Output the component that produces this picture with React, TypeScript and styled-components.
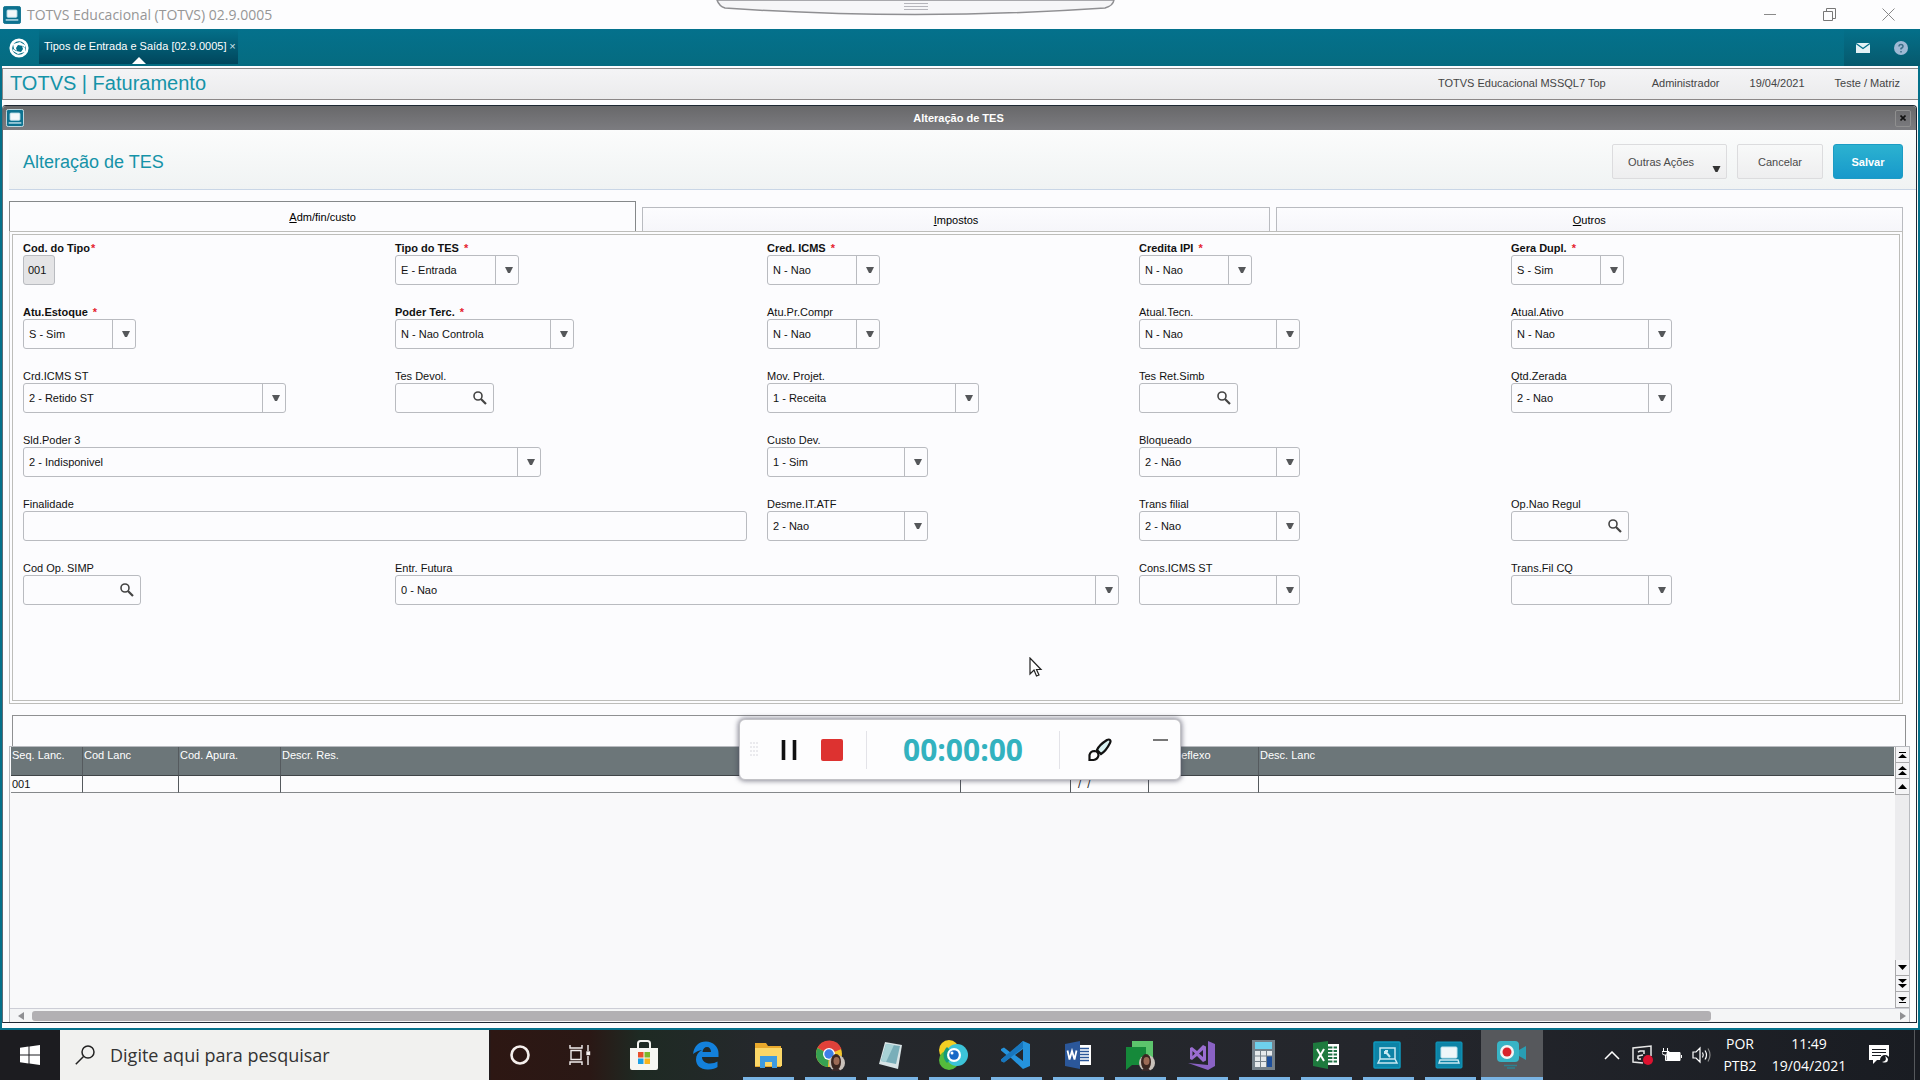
import React from "react";
import styled, { createGlobalStyle, css } from "styled-components";

const ui = `"Liberation Sans", Arial, sans-serif`;
const win = `"Open Sans", "Noto Sans", sans-serif`;
const line = "#b9bbc0";
const teal = "#04708a";

const Global = createGlobalStyle`
  *, *::before, *::after { box-sizing: border-box; }
  body { margin: 0; background: #fcfcfe; }
  button, input, select { font: inherit; color: inherit; margin: 0; }
  h1, h2 { margin: 0; font-weight: 400; }
  svg { display: block; }
`;

const Desktop = styled.div`
  position: relative;
  min-height: 100vh;
  display: flex;
  flex-direction: column;
  font: 11px/14px ${ui};
  color: #111;
  overflow: hidden;
`;

const WindowBar = styled.header`
  display: flex;
  align-items: center;
  height: 29px;
  padding: 0 22px 0 3px;
  gap: 6px;
  background: #fdfdfe;
`;
const WindowTitle = styled.span`
  flex: 1;
  font: 14px/20px ${win};
  color: #969696;
`;
const WindowControls = styled.div`
  display: flex;
  gap: 39px;
`;
const PlainButton = styled.button`
  display: flex;
  align-items: center;
  justify-content: center;
  min-width: 20px;
  padding: 0;
  border: 0;
  background: none;
`;
const PullTab = styled.svg`
  position: absolute;
  top: 0;
  left: 50%;
  margin-left: -244px;
`;

const AppBar = styled.nav`
  display: flex;
  align-items: center;
  height: 37px;
  padding-left: 9px;
  background: linear-gradient(#04718c, #056b80);
  color: #fff;
`;
const AppTab = styled.div`
  position: relative;
  display: flex;
  align-items: center;
  align-self: stretch;
  gap: 2px;
  margin: 0 auto 2px 10px;
  padding: 0 2px 2px 5px;
  background: linear-gradient(#04708a, #00465c);
  &::after {
    content: "";
    position: absolute;
    left: 50%;
    bottom: 0;
    margin-left: -7px;
    border: 7px solid transparent;
    border-top: 0;
    border-bottom-color: #fff;
  }
`;
const TabClose = styled(PlainButton)`
  min-width: 8px;
  color: #cfe3ea;
`;
const BarAction = styled(PlainButton)`
  width: 38px;
  align-self: stretch;
  background: linear-gradient(#04708a, #06596d);
`;

const Workspace = styled.main`
  flex: 1;
  display: flex;
  flex-direction: column;
  padding: 2px 1px 5px 0;
  border: solid ${teal};
  border-width: 0 2px 2px;
  background: #fcfcfe;
`;
const ModuleBar = styled.div`
  display: flex;
  align-items: center;
  height: 32px;
  margin-right: -1px;
  padding: 0 18px 2px 7px;
  border: 1px solid #8b8787;
  border-width: 1px 0 1px 1px;
  background: linear-gradient(#f4f4f6, #ebebec);
`;
const ModuleTitle = styled.h1`
  flex: 1;
  font-size: 20px;
  line-height: 26px;
  color: #1593a8;
`;
const SessionInfo = styled.span<{ $gap: number }>`
  margin-left: ${(p) => p.$gap}px;
  color: #444;
`;

const Dialog = styled.section`
  flex: 1;
  display: flex;
  flex-direction: column;
  margin-top: 5px;
  border: 1px solid #1d2733;
  border-left-color: #5b6a74;
  border-radius: 4px 4px 0 0;
`;
const DialogBar = styled.div`
  display: grid;
  grid-template-columns: 24px 1fr 24px;
  align-items: center;
  height: 24px;
  padding: 0 5px 0 3px;
  border-radius: 3px 3px 0 0;
  background: linear-gradient(#68686a, #7c7c80);
  color: #fff;
  font-weight: 700;
  text-align: center;
`;
const DialogClose = styled(PlainButton)`
  justify-self: end;
  width: 16px;
  min-width: 0;
  height: 17px;
  border: 1px solid #8f8f8f;
  border-radius: 2px;
  color: #111;
`;
const DialogHead = styled.div`
  display: flex;
  align-items: center;
  gap: 10px;
  height: 60px;
  margin-left: 6px;
  padding: 4px 13px 0 14px;
  border-bottom: 1px solid #c9d6e6;
  background: linear-gradient(#fbfcfc, #f0f3f3);
`;
const DialogTitle = styled.h2`
  flex: 1;
  font-size: 18px;
  line-height: 24px;
  color: #1593a8;
`;
const ActionButton = styled.button<{ $w: number; $primary?: boolean }>`
  display: flex;
  align-items: center;
  justify-content: center;
  width: ${(p) => p.$w}px;
  height: 35px;
  padding: 0;
  border: 1px solid #dcdcde;
  border-radius: 2px;
  background: linear-gradient(#f8f9f9, #eeeeef);
  color: #4a4a4a;
  ${(p) =>
    p.$primary &&
    css`
      border-color: #1c9cc4;
      border-radius: 3px;
      background: linear-gradient(#2cb2d0, #1799cb);
      color: #fff;
      font-weight: 700;
    `}
`;
const MenuButton = styled(ActionButton)`
  justify-content: space-between;
  padding: 0 5px 0 15px;
  svg { margin-top: 14px; }
`;

const TabList = styled.div`
  display: flex;
  align-items: flex-end;
  gap: 6px;
  margin: 11px 13px 0 6px;
`;
const FolderTab = styled.button<{ $active?: boolean }>`
  flex: 1 1 0;
  height: ${(p) => (p.$active ? 30 : 24)}px;
  padding: 0;
  border: 1px solid ${(p) => (p.$active ? "#85888a" : line)};
  border-bottom: 0;
  background: ${(p) => (p.$active ? "#fcfcfe" : "linear-gradient(#fcfcfe, #f6f6fa)")};
  color: #000;
`;

const PanelFrame = styled.div`
  margin: 0 13px 0 6px;
  padding: 2px;
  border: 1px solid #bdbdba;
`;
const Panel = styled.form`
  display: grid;
  grid-template-columns: repeat(5, 1fr);
  align-content: start;
  gap: 20px 0;
  min-height: 467px;
  padding: 6px 16px 80px 10px;
  border: 1px solid #bdbdba;
`;
const FieldCell = styled.div<{ $span?: number }>`
  grid-column-end: span ${(p) => p.$span ?? 1};
  min-width: 0;
`;
const FieldLabel = styled.label<{ $required?: boolean }>`
  display: block;
  font-weight: ${(p) => (p.$required ? 700 : 400)};
  color: #111;
`;
const Star = styled.span<{ $tight?: boolean }>`
  margin-left: ${(p) => (p.$tight ? 1 : 5)}px;
  color: #e5232e;
`;
const FieldBox = styled.div<{ $w: number; $locked?: boolean }>`
  display: flex;
  width: ${(p) => p.$w}px;
  height: 30px;
  border: 1px solid ${line};
  border-radius: 3px;
  background: ${(p) => (p.$locked ? "#e4e4e6" : "#fcfcfe")};
  position: relative;
`;
const TextInput = styled.input`
  flex: 1;
  min-width: 0;
  padding: 0 4px;
  border: 0;
  background: none;
  outline: 0;
`;
const Dropdown = styled.select`
  flex: 1;
  min-width: 0;
  padding: 0 26px 0 5px;
  border: 0;
  background: none;
  appearance: none;
  outline: 0;
`;
const DropArrow = styled.span`
  position: absolute;
  top: 0;
  right: 0;
  bottom: 0;
  display: flex;
  align-items: center;
  justify-content: center;
  width: 23px;
  padding-left: 4px;
  border-left: 1px solid ${line};
  pointer-events: none;
`;
const LookupButton = styled(PlainButton)`
  width: 27px;
`;

const GridCaption = styled.div`
  height: 31px;
  margin: 11px 10px 0 9px;
  border: 1px solid #8f9092;
  border-bottom: 0;
`;
const GridFrame = styled.div`
  flex: 1;
  display: grid;
  grid-template: 1fr auto / 1fr 14px;
  margin: 0 6px;
  border: 1px solid ${line};
  border-bottom: 0;
  background: #f9f9fa;
`;
const DataTable = styled.table`
  align-self: start;
  width: calc(100% - 2px);
  margin-left: 1px;
  border-collapse: separate;
  border-spacing: 0;
  table-layout: fixed;
  th, td {
    padding: 0 1px;
    border-right: 1px solid #555a5e;
    text-align: left;
    font-weight: 400;
    overflow: hidden;
    white-space: nowrap;
  }
  th:last-child, td:last-child { border-right: 0; }
  th {
    height: 29px;
    padding-top: 1px;
    vertical-align: top;
    border-bottom: 1px solid #3f4447;
    background: #6c7679;
    color: #fff;
  }
  td {
    height: 17px;
    border-bottom: 1px solid #85888a;
    background: #fcfcfd;
  }
`;
const DateCell = styled.span`
  padding-left: 3px;
  white-space: pre;
`;
const VScroll = styled.div`
  display: flex;
  flex-direction: column;
  background: #ececee;
`;
const VScrollGap = styled.div`
  flex: 1;
`;
const ScrollButton = styled(PlainButton)`
  min-width: 0;
  height: 16px;
  border: 1px solid #a9a9ab;
  border-width: 0 0 1px 1px;
  background: #f4f4f6;
`;
const HScroll = styled.div`
  grid-column: 1 / -1;
  display: grid;
  grid-template-columns: 22px 1fr 12px;
  align-items: center;
  height: 14px;
  border-top: 1px solid #cdced6;
  background: #f4f5f6;
`;
const HThumb = styled.div`
  width: 90%;
  height: 10px;
  border-radius: 3px;
  background: #b2b0b3;
`;
const HArrow = styled(PlainButton)`
  min-width: 0;
`;

const Recorder = styled.div`
  position: absolute;
  left: 50%;
  bottom: 300px;
  display: flex;
  align-items: center;
  width: 442px;
  height: 61px;
  margin-left: -221px;
  border: 1px solid #c2c2c6;
  border-radius: 6px;
  background: #fdfdfe;
  box-shadow: 0 0 5px 1px rgba(60, 60, 80, 0.6);
`;
const RecGrip = styled.span`
  width: 28px;
  padding-left: 10px;
`;
const RecPause = styled(PlainButton)`
  width: 42px;
`;
const RecStop = styled(PlainButton)`
  width: 44px;
`;
const RecTime = styled.time`
  flex: 1;
  margin-left: 12px;
  border: solid #e3e3e8;
  border-width: 0 1px;
  font: 700 30px/38px ${win};
  color: #33b2bf;
  text-align: center;
`;
const RecBrush = styled(PlainButton)`
  width: 80px;
`;
const RecMin = styled(PlainButton)`
  width: 40px;
  height: 40px;
  align-items: flex-start;
  padding-top: 9px;
`;
const Pointer = styled.svg`
  position: absolute;
  left: 1029px;
  top: 657px;
`;

const Taskbar = styled.footer`
  display: flex;
  align-items: stretch;
  height: 50px;
  background: linear-gradient(90deg, #1c1c20 0, #1c1c20 489px, #2d1713 491px, #2a1815 590px, #1e2a23 640px, #25282c 760px, #24262c 1400px, #191c22 100%);
  color: #fff;
`;
const StartButton = styled(PlainButton)`
  width: 60px;
`;
const SearchBox = styled.label`
  display: flex;
  align-items: center;
  gap: 15px;
  width: 429px;
  padding-left: 15px;
  background: #f1f1ef;
  color: #222;
`;
const SearchInput = styled.input`
  flex: 1;
  min-width: 0;
  padding: 0;
  border: 0;
  background: none;
  outline: 0;
  font: 18px/24px ${win};
  &::placeholder { color: #333; opacity: 1; }
`;
const TaskButton = styled.button<{ $open?: boolean; $active?: boolean }>`
  display: flex;
  align-items: center;
  justify-content: center;
  width: 62px;
  padding: 0;
  border: 0;
  background: ${(p) => (p.$active ? "#56585c" : "none")};
  ${(p) =>
    p.$open &&
    css`
      background-image: linear-gradient(#79b4e4, #79b4e4);
      background-repeat: no-repeat;
      background-size: ${p.$active ? "62px" : "51px"} 3px;
      background-position: center bottom;
    `}
`;
const Tray = styled.div`
  display: flex;
  align-items: center;
  margin-left: auto;
  padding-right: 5px;
`;
const TrayIcon = styled(PlainButton)`
  width: 30px;
`;
const TrayText = styled.div<{ $w: number }>`
  width: ${(p) => p.$w}px;
  font: 14px/22px ${win};
  text-align: center;
  white-space: pre-line;
`;
const Notice = styled(PlainButton)`
  width: 60px;
  height: 50px;
  padding-right: 12px;
  border-right: 1px solid #55585c;
`;

const PcIcon = ({ s = 18, outline = "#0b6f8c" }: { s?: number; outline?: string }) => (
  <svg width={s} height={s} viewBox="0 0 20 20">
    <rect x="0.5" y="0.5" width="19" height="19" rx="2" fill="#0d7290" stroke={outline} />
    <rect x="4.5" y="4.5" width="11" height="8" rx="1" fill="#f4f8fa" stroke="#bfe0ea" />
    <path d="M3 15.5h14" stroke="#bfe0ea" strokeWidth="1.6" />
  </svg>
);
const Triangle = ({ w = 8, fill = "#55575a" }: { w?: number; fill?: string }) => (
  <svg width={w} height="6" viewBox="0 0 8 6"><path d="M0 0h8L5 6H3z" fill={fill} /></svg>
);
const Lens = () => (
  <svg width="14" height="14" viewBox="0 0 14 14" fill="none" stroke="#444">
    <circle cx="5" cy="5" r="4" strokeWidth="1.6" />
    <path d="M8 8l5 5" strokeWidth="2.2" />
  </svg>
);
const scrollPaths: Record<string, string> = {
  first: "M1 2h7v1H1zM4.500 4L9 8H0z",
  pageUp: "M4.500 0L9 4H0zM4.500 5L9 9H0z",
  up: "M4.500 2L9 7H0z",
  down: "M4.500 7L9 2H0z",
  pageDown: "M4.500 4L9 0H0zM4.500 9L9 5H0z",
  last: "M1 7h7v1H1zM4.500 6L9 2H0z",
};
const Scroll = ({ kind, label }: { kind: string; label: string }) => (
  <ScrollButton type="button" aria-label={label}>
    <svg width="9" height="9" viewBox="0 0 9 9"><path d={scrollPaths[kind]} fill="#000" /></svg>
  </ScrollButton>
);

type FieldDef = {
  label: string;
  kind: "text" | "select" | "lookup";
  w: number;
  value?: string;
  required?: boolean;
  tight?: boolean;
  locked?: boolean;
  span?: number;
};
const fields: FieldDef[] = [
  { label: "Cod. do Tipo", kind: "text", w: 32, value: "001", required: true, tight: true, locked: true },
  { label: "Tipo do TES", kind: "select", w: 124, value: "E - Entrada", required: true },
  { label: "Cred. ICMS", kind: "select", w: 113, value: "N - Nao", required: true },
  { label: "Credita IPI", kind: "select", w: 113, value: "N - Nao", required: true },
  { label: "Gera Dupl.", kind: "select", w: 113, value: "S - Sim", required: true },
  { label: "Atu.Estoque", kind: "select", w: 113, value: "S - Sim", required: true },
  { label: "Poder Terc.", kind: "select", w: 179, value: "N - Nao Controla", required: true },
  { label: "Atu.Pr.Compr", kind: "select", w: 113, value: "N - Nao" },
  { label: "Atual.Tecn.", kind: "select", w: 161, value: "N - Nao" },
  { label: "Atual.Ativo", kind: "select", w: 161, value: "N - Nao" },
  { label: "Crd.ICMS ST", kind: "select", w: 263, value: "2 - Retido ST" },
  { label: "Tes Devol.", kind: "lookup", w: 99 },
  { label: "Mov. Projet.", kind: "select", w: 212, value: "1 - Receita" },
  { label: "Tes Ret.Simb", kind: "lookup", w: 99 },
  { label: "Qtd.Zerada", kind: "select", w: 161, value: "2 - Nao" },
  { label: "Sld.Poder 3", kind: "select", w: 518, value: "2 - Indisponivel", span: 2 },
  { label: "Custo Dev.", kind: "select", w: 161, value: "1 - Sim" },
  { label: "Bloqueado", kind: "select", w: 161, value: "2 - Não" },
  { label: "Finalidade", kind: "text", w: 724, span: 2 },
  { label: "Desme.IT.ATF", kind: "select", w: 161, value: "2 - Nao" },
  { label: "Trans filial", kind: "select", w: 161, value: "2 - Nao" },
  { label: "Op.Nao Regul", kind: "lookup", w: 118 },
  { label: "Cod Op. SIMP", kind: "lookup", w: 118 },
  { label: "Entr. Futura", kind: "select", w: 724, value: "0 - Nao", span: 2 },
  { label: "Cons.ICMS ST", kind: "select", w: 161 },
  { label: "Trans.Fil CQ", kind: "select", w: 161 },
];

const Field = ({ def, id }: { def: FieldDef; id: string }) => (
  <FieldCell $span={def.span}>
    <FieldLabel htmlFor={id} $required={def.required}>
      {def.label}
      {def.required && <Star $tight={def.tight}>*</Star>}
    </FieldLabel>
    <FieldBox $w={def.w} $locked={def.locked}>
      {def.kind === "select" ? (
        <>
          <Dropdown id={id} defaultValue={def.value ?? ""}>
            <option>{def.value ?? ""}</option>
          </Dropdown>
          <DropArrow><Triangle /></DropArrow>
        </>
      ) : (
        <TextInput id={id} type="text" defaultValue={def.value} readOnly={def.locked} />
      )}
      {def.kind === "lookup" && (
        <LookupButton type="button" aria-label={`Pesquisar ${def.label}`}><Lens /></LookupButton>
      )}
    </FieldBox>
  </FieldCell>
);

const columns: { title: string; w?: number; value?: React.ReactNode }[] = [
  { title: "Seq. Lanc.", w: 72, value: "001" },
  { title: "Cod Lanc", w: 96 },
  { title: "Cod. Apura.", w: 102 },
  { title: "Descr. Res.", w: 680 },
  { title: "", w: 110 },
  { title: "", w: 78, value: <DateCell>{" /  /"}</DateCell> },
  { title: "Cod Reflexo", w: 110 },
  { title: "Desc. Lanc" },
];

const Face = () => (
  <g>
    <circle cx="23" cy="24" r="8" fill="#c9c2bb" />
    <ellipse cx="22" cy="23" rx="5" ry="8" fill="#3b2620" />
    <ellipse cx="22.500" cy="22" rx="3" ry="4" fill="#9c6a55" />
    <path d="M17 32q5-6 10 0z" fill="#3a2a2a" />
  </g>
);
const icon = (children: React.ReactNode) => (
  <svg width="32" height="32" viewBox="0 0 32 32">{children}</svg>
);

const tasks: { name: string; open?: boolean; active?: boolean; art: React.ReactNode }[] = [
  { name: "Cortana", art: icon(<circle cx="16" cy="16" r="8.500" fill="none" stroke="#f5efec" strokeWidth="2.600" />) },
  {
    name: "Visão de tarefas",
    art: icon(
      <g fill="none" stroke="#f3eeee" strokeWidth="1.400">
        <path d="M4 6v3h12V6M4 26v-3h12v3M5 11.500h10v9H5zM22 6v6M22 17v9" />
        <rect x="21" y="13" width="2.500" height="2.500" fill="#fff" />
      </g>
    ),
  },
  {
    name: "Loja",
    art: icon(
      <g>
        <path d="M10 9V4.500Q10 2 12.500 2h7Q22 2 22 4.500V9" fill="none" stroke="#f4f4f0" strokeWidth="2" />
        <path d="M2 9h28v20q0 2-2 2H4q-2 0-2-2z" fill="#f6f6f2" />
        <path d="M10 13h5.500v5.500H10z" fill="#e8502c" /><path d="M16.500 13H22v5.500h-5.500z" fill="#7db82c" />
        <path d="M10 19.500h5.500V25H10z" fill="#1c9fe4" /><path d="M16.500 19.500H22V25h-5.500z" fill="#f8b41c" />
      </g>
    ),
  },
  {
    name: "Edge",
    art: icon(
      <path d="M3 15C4 7 9 2.500 16 2.500S28.500 8 28.500 14v4H12c0 4 3.500 6.500 8 6.500 3 0 5.500-1 7.500-2v5.500c-2 1.500-5 2.500-9 2.500C11 31 6 26.500 6 20.500c0-4 2-7.500 6-9.500-3 .5-6 1.500-9 4zM12.500 13H21c0-3-1.500-5-4-5s-4.200 2-4.500 5z" fill="#1381dc" />
    ),
  },
  {
    name: "Explorador",
    open: true,
    art: icon(
      <g>
        <path d="M3 4h11l2 3h13v21H3z" fill="#e9a92c" /><path d="M3 9h27v18H3z" fill="#fbd768" />
        <path d="M8 17h17v12h-5v-6h-7v6H8z" fill="#3d9be0" />
      </g>
    ),
  },
  {
    name: "Chrome",
    open: true,
    art: icon(
      <g>
        <circle cx="15" cy="15" r="13" fill="#f3c52c" />
        <path d="M15 15L3.500 9A13 13 0 0 1 27.500 10z" fill="#e0413a" />
        <path d="M15 15L3.500 9A13 13 0 0 0 14 28z" fill="#36a152" />
        <circle cx="15" cy="15" r="6" fill="#fff" /><circle cx="15" cy="15" r="4.700" fill="#3e7fe6" />
        <Face />
      </g>
    ),
  },
  {
    name: "Bloco de notas",
    open: true,
    art: icon(
      <g>
        <path d="M9 3l17 3-4 24L3 25z" fill="#d8e4e6" /><path d="M10 5l14 2-4 18L5 22z" fill="#79aeb9" />
        <path d="M10 5l8 1-8 17-5-1z" fill="#a8d2d6" />
      </g>
    ),
  },
  {
    name: "Navegador",
    open: true,
    art: icon(
      <g>
        <circle cx="11" cy="11" r="10" fill="#f4cf23" /><circle cx="11" cy="21" r="10" fill="#55bb3c" />
        <circle cx="19" cy="16" r="11" fill="#3cc3d8" /><path d="M9 8a11 11 0 0 0 0 16l8-8z" fill="#159a7c" />
        <circle cx="16" cy="16" r="7" fill="#fff" /><circle cx="16" cy="16" r="4.800" fill="#1668c7" />
        <circle cx="14" cy="14" r="1.500" fill="#fff" />
      </g>
    ),
  },
  {
    name: "VS Code",
    open: true,
    art: icon(
      <g>
        <path fillRule="evenodd" d="M23 2l7 3v22l-7 3L10.500 18.500 4 23.500 1 22v-1.500L6.500 16 1 11.500V10l3-1.500 6.500 5zM23 10l-8 6 8 6z" fill="#2593dc" />
        <path d="M1 20.500V22l3 1.500L23 9V2z" fill="#1876bd" />
      </g>
    ),
  },
  {
    name: "Word",
    open: true,
    art: icon(
      <g>
        <path d="M15 6h14v20H15z" fill="#fff" />
        <path d="M18 9.500h9M18 12.500h9M18 15.500h9M18 18.500h9M18 21.500h9" stroke="#2b579a" strokeWidth="1.400" />
        <path d="M3 5l15-3v28L3 27z" fill="#2b579a" />
        <path d="M5.500 11.500l2 9 2.500-8.500 2.500 8.500 2-9" fill="none" stroke="#fff" strokeWidth="1.800" />
      </g>
    ),
  },
  {
    name: "Mensagens",
    open: true,
    art: icon(
      <g>
        <path d="M8 2h21v20H8z" fill="#5cc46c" /><path d="M2 8h20v18H8l-6 5z" fill="#15893a" /><Face />
      </g>
    ),
  },
  {
    name: "Visual Studio",
    open: true,
    art: icon(
      <g>
        <path d="M22 2l7 3v22l-7 4L2 24l20 2z" fill="#8a62c4" />
        <path d="M4 9l2-1 5 4 6-6 3 1.500v14L17 23l-6-6-5 4-2-1zM6.500 12v5l2.500-2.500zM17 11l-4 3.500 4 3.500z" fill="#9a6dd0" fillRule="evenodd" />
      </g>
    ),
  },
  {
    name: "Calculadora",
    open: true,
    art: icon(
      <g>
        <path d="M4 1h23v30H4z" fill="#75818a" /><path d="M7 3h17v7H7z" fill="#6ed0ec" />
        <path d="M7 12h5v4.500H7zM13 12h5v4.500h-5zM19 12h5v4.500h-5zM7 17.500h5V22H7zM13 17.500h5V22h-5zM7 23h5v5H7zM13 23h5v5h-5z" fill="#e6eaec" />
        <path d="M19 17.500h5V28h-5z" fill="#1d4f9c" />
      </g>
    ),
  },
  {
    name: "Excel",
    open: true,
    art: icon(
      <g>
        <path d="M15 5h14v21H15z" fill="#fff" />
        <path d="M18 8.500h9M18 12h9M18 15.500h9M18 19h9M18 22.500h9" stroke="#1f7145" strokeWidth="2" />
        <path d="M23 7v17" stroke="#fff" strokeWidth="1.200" />
        <path d="M3 4l15-2v28L3 27z" fill="#1e7a3e" />
        <path d="M7 10l7 12M14 10L7 22" stroke="#fff" strokeWidth="2" />
      </g>
    ),
  },
  {
    name: "SmartClient",
    open: true,
    art: icon(
      <g fill="none" stroke="#c8e9f2" strokeWidth="1.500">
        <rect x="2" y="3" width="26" height="26" rx="1" fill="#0d83a6" stroke="#0e99bd" />
        <path d="M8 9h15v11H8zM8 20l-2 4h19l-2-4" /><path d="M13 12l5 6M13 12h3M13 12v3" strokeWidth="2" />
      </g>
    ),
  },
  {
    name: "TOTVS Educacional",
    open: true,
    art: icon(
      <g>
        <rect x="2" y="3" width="26" height="26" rx="1" fill="#0d83a6" stroke="#0e99bd" />
        <rect x="7" y="8" width="16" height="11" rx="1" fill="#eef6f9" stroke="#bfe3ed" />
        <path d="M6 21h18l1 3H5z" fill="none" stroke="#c8e9f2" strokeWidth="1.400" />
      </g>
    ),
  },
  {
    name: "Gravador",
    open: true,
    active: true,
    art: icon(
      <g>
        <rect x="1" y="2" width="22" height="21" rx="4" fill="#38b4c6" /><path d="M23 11l7-4v14l-7-4z" fill="#299eb4" />
        <circle cx="11" cy="13" r="7" fill="#f5f5f5" /><circle cx="11" cy="13" r="4.500" fill="#d9232c" />
        <path d="M8 26.500h13M11 29h8" stroke="#2c8190" strokeWidth="1.500" />
      </g>
    ),
  },
];

export default function App() {
  return (
    <Desktop>
      <Global />
      <WindowBar>
        <PcIcon />
        <WindowTitle>TOTVS Educacional (TOTVS) 02.9.0005</WindowTitle>
        <WindowControls>
          <PlainButton aria-label="Minimizar">
            <svg width="12" height="12"><path d="M0 5.500h12" stroke="#8a8a8a" /></svg>
          </PlainButton>
          <PlainButton aria-label="Restaurar">
            <svg width="13" height="13" fill="none" stroke="#777"><path d="M.5 3.500h9v9h-9zM3.500 3V.5h9v10H10" /></svg>
          </PlainButton>
          <PlainButton aria-label="Fechar">
            <svg width="13" height="13"><path d="M.5.5l12 12M12.500.5l-12 12" stroke="#888" /></svg>
          </PlainButton>
        </WindowControls>
      </WindowBar>
      <PullTab width="400" height="18" viewBox="0 0 400 18">
        <path d="M1 0q2 6 8 8 190 13 380 0 8-2 9-8z" fill="#f6f6f8" stroke="#8f8f92" strokeWidth="1.500" />
        <path d="M188 3.500h24M188 6.500h24M188 9.500h24" stroke="#b5b5bb" />
      </PullTab>

      <AppBar>
        <svg width="20" height="20" viewBox="0 0 20 20">
          <circle cx="10" cy="10" r="8.200" fill="none" stroke="#fff" strokeWidth="2.800" />
          <path d="M4 6l7-2 5 3v3l-2-2-5-1-2 3 1 3-3-2z" fill="#fff" />
          <path d="M16 14l-7 2-5-3v-2l3 2 5 1 2-3-1-3 3 2z" fill="#fff" />
        </svg>
        <AppTab>
          <span>Tipos de Entrada e Saída [02.9.0005]</span>
          <TabClose aria-label="Fechar aba">×</TabClose>
        </AppTab>
        <BarAction aria-label="Mensagens">
          <svg width="14" height="10" viewBox="0 0 14 10">
            <path d="M0 0h14v10H0z" fill="#e4f1f5" /><path d="M0 .5l7 5 7-5" fill="none" stroke={teal} strokeWidth="1.300" />
          </svg>
        </BarAction>
        <BarAction aria-label="Ajuda">
          <svg width="14" height="14" viewBox="0 0 14 14" fill="none" stroke="#3d6f88" strokeWidth="1.500">
            <circle cx="7" cy="7" r="7" fill="#9fb9d4" stroke="none" />
            <path d="M5 5.500q0-2 2-2t2 2q0 1-2 2v1M7 10v1.500" />
          </svg>
        </BarAction>
      </AppBar>

      <Workspace>
        <ModuleBar>
          <ModuleTitle>TOTVS | Faturamento</ModuleTitle>
          <SessionInfo $gap={0}>TOTVS Educacional MSSQL7 Top</SessionInfo>
          <SessionInfo $gap={46}>Administrador</SessionInfo>
          <SessionInfo $gap={30}>19/04/2021</SessionInfo>
          <SessionInfo $gap={30}>Teste / Matriz</SessionInfo>
        </ModuleBar>

        <Dialog aria-labelledby="dialog-title">
          <DialogBar>
            <PcIcon s={18} outline="#d5e8ee" />
            <span>Alteração de TES</span>
            <DialogClose aria-label="Fechar">
              <svg width="6" height="6"><path d="M.5.5l5 5M5.500.5l-5 5" stroke="#111" strokeWidth="1.600" /></svg>
            </DialogClose>
          </DialogBar>
          <DialogHead>
            <DialogTitle id="dialog-title">Alteração de TES</DialogTitle>
            <MenuButton $w={115}>Outras Ações<Triangle w={9} fill="#333" /></MenuButton>
            <ActionButton $w={86}>Cancelar</ActionButton>
            <ActionButton $w={70} $primary>Salvar</ActionButton>
          </DialogHead>

          <TabList role="tablist">
            <FolderTab role="tab" aria-selected $active><u>A</u>dm/fin/custo</FolderTab>
            <FolderTab role="tab"><u>I</u>mpostos</FolderTab>
            <FolderTab role="tab"><u>O</u>utros</FolderTab>
          </TabList>
          <PanelFrame>
            <Panel>
              {fields.map((f, i) => <Field key={f.label} def={f} id={`campo-${i}`} />)}
            </Panel>
          </PanelFrame>

          <GridCaption />
          <GridFrame>
            <DataTable>
              <colgroup>
                {columns.map((c, i) => <col key={i} width={c.w} />)}
              </colgroup>
              <thead>
                <tr>{columns.map((c, i) => <th key={i} scope="col">{c.title}</th>)}</tr>
              </thead>
              <tbody>
                <tr>{columns.map((c, i) => <td key={i}>{c.value}</td>)}</tr>
              </tbody>
            </DataTable>
            <VScroll>
              <Scroll kind="first" label="Primeiro" />
              <Scroll kind="pageUp" label="Página acima" />
              <Scroll kind="up" label="Acima" />
              <VScrollGap />
              <Scroll kind="down" label="Abaixo" />
              <Scroll kind="pageDown" label="Página abaixo" />
              <Scroll kind="last" label="Último" />
            </VScroll>
            <HScroll>
              <HArrow type="button" aria-label="Esquerda">
                <svg width="6" height="8"><path d="M6 0v8L0 4z" fill="#8f8f92" /></svg>
              </HArrow>
              <HThumb />
              <HArrow type="button" aria-label="Direita">
                <svg width="6" height="8"><path d="M0 0v8l6-4z" fill="#8f8f92" /></svg>
              </HArrow>
            </HScroll>
          </GridFrame>
        </Dialog>
      </Workspace>

      <Taskbar>
        <StartButton aria-label="Iniciar">
          <svg width="20" height="20" viewBox="0 0 20 20" fill="#fff">
            <path d="M0 2.800l8.500-1.200v8H0zM9.500 1.400L20 0v9.600H9.500zM0 10.500h8.500v8L0 17.200zM9.500 10.500H20V20L9.500 18.600z" />
          </svg>
        </StartButton>
        <SearchBox>
          <svg width="20" height="20" viewBox="0 0 20 20" fill="none" stroke="#222" strokeWidth="1.500">
            <circle cx="13" cy="7" r="6" /><path d="M8.500 11.500L.8 19.200" />
          </svg>
          <SearchInput type="search" aria-label="Pesquisar" placeholder="Digite aqui para pesquisar" />
        </SearchBox>
        {tasks.map((t) => (
          <TaskButton key={t.name} aria-label={t.name} $open={t.open} $active={t.active}>{t.art}</TaskButton>
        ))}
        <Tray>
          <TrayIcon aria-label="Ícones ocultos">
            <svg width="16" height="9"><path d="M1 8l7-7 7 7" fill="none" stroke="#fff" strokeWidth="1.500" /></svg>
          </TrayIcon>
          <TrayIcon aria-label="Rede">
            <svg width="22" height="20" viewBox="0 0 22 20" fill="none" stroke="#e8e8e8" strokeWidth="1.500">
              <path d="M20 11V1L2 3v14l10 1M7 7l2-1h4v3M7 14h3M7 14v-3l5-1" /><circle cx="17" cy="15" r="5" fill="#dd1230" stroke="none" />
            </svg>
          </TrayIcon>
          <TrayIcon aria-label="Bateria">
            <svg width="20" height="14" viewBox="0 0 20 14" fill="none" stroke="#fff">
              <path d="M5 4.500h13v8H5z" fill="#fff" /><path d="M19.500 7v3M1.500 0v3M5.500 0v3M0 3.500h7v2L5 7H2L0 5.500zM3.500 7v5.500H5" />
            </svg>
          </TrayIcon>
          <TrayIcon aria-label="Volume">
            <svg width="20" height="18" viewBox="0 0 20 18" fill="none" stroke="#fff" strokeWidth="1.200">
              <path d="M1 6h3l4-4v14l-4-4H1zM10.500 6.500q1.500 2.500 0 5M13 4.500q3 4.500 0 9" /><path d="M16 2.500q4 6.500 0 13" stroke="#888" />
            </svg>
          </TrayIcon>
          <TrayText $w={46}>{"POR\nPTB2"}</TrayText>
          <TrayText $w={92}>{"11:49\n19/04/2021"}</TrayText>
          <Notice aria-label="Notificações">
            <svg width="22" height="20" viewBox="0 0 22 20">
              <path d="M1 0h20v15H9l-4 4v-4H1z" fill="#fff" /><path d="M4 4.500h14M4 7.500h14M4 10.500h9" stroke="#191c22" strokeWidth="1.200" />
              <circle cx="17" cy="15" r="5" fill="#191c22" /><path d="M17 11q3 5-3 6 6 2 6-3-1-2-3-3z" fill="#fff" />
            </svg>
          </Notice>
        </Tray>
      </Taskbar>

      <Pointer width="14" height="20" viewBox="0 0 14 20">
        <path d="M1 1v16l4-4 2.500 6 2.500-1-2.500-5.500H12z" fill="#fff" stroke="#222" strokeWidth="1.200" />
      </Pointer>
      <Recorder>
        <RecGrip>
          <svg width="8" height="16"><path d="M0 1h8M0 5h8M0 9h8M0 13h8" stroke="#d8d8de" strokeDasharray="2 1" /></svg>
        </RecGrip>
        <RecPause aria-label="Pausar">
          <svg width="16" height="22"><path d="M2.500 1v20M13.500 1v20" stroke="#111" strokeWidth="3.600" /></svg>
        </RecPause>
        <RecStop aria-label="Parar">
          <svg width="22" height="22"><rect width="22" height="22" rx="2" fill="#dd3230" /></svg>
        </RecStop>
        <RecTime>00:00:00</RecTime>
        <RecBrush aria-label="Desenhar">
          <svg width="24" height="24" viewBox="0 0 24 24" fill="none" stroke="#111" strokeWidth="2.200">
            <path d="M9 12q2-5 10-10 2-1 3 0t0 3q-4 8-9 11z" fill="#d9f2f2" /><path d="M1.500 22v-5q1-4 5-4 4 .5 4 4.500-1 4-5 4.500z" />
          </svg>
        </RecBrush>
        <RecMin aria-label="Recolher">
          <svg width="15" height="2"><path d="M0 1h15" stroke="#777" strokeWidth="2" /></svg>
        </RecMin>
      </Recorder>
    </Desktop>
  );
}
